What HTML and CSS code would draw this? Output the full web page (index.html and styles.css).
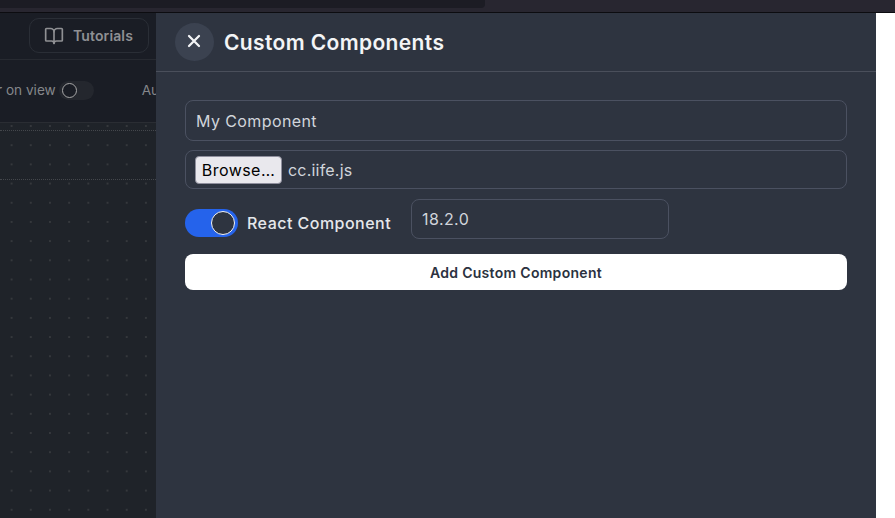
FILE: index.html
```html
<!DOCTYPE html>
<html lang="en">
<head>
<meta charset="utf-8">
<title>Custom Components</title>
<link rel="stylesheet" href="styles.css">
</head>
<body>
<div class="topstrip"><div class="thumb"></div></div>
<div class="main">
  <div class="app">
    <header class="apphead">
      <button class="tutorials">
        <svg class="book" viewBox="0 0 24 24" width="20" height="20" fill="none" stroke="currentColor" stroke-width="2" stroke-linejoin="round" stroke-linecap="round"><path d="M12 7v14"/><path d="M3 18a1 1 0 0 1-1-1V4a1 1 0 0 1 1-1h5a4 4 0 0 1 4 4 4 4 0 0 1 4-4h5a1 1 0 0 1 1 1v13a1 1 0 0 1-1 1h-6a3 3 0 0 0-3 3 3 3 0 0 0-3-3z"/></svg>
        <span>Tutorials</span>
      </button>
    </header>
    <div class="toolbar">
      <span class="tool-label">r on view</span>
      <span class="mini-toggle"><span class="mini-knob"></span></span>
      <span class="tool-label au">Au</span>
    </div>
    <div class="canvas">
      <div class="guide g1"></div>
      <div class="guide g2"></div>
    </div>
  </div>
  <aside class="panel">
    <div class="panel-head">
      <button class="close" aria-label="Close">
        <svg viewBox="0 0 24 24" width="20" height="20" fill="none" stroke="currentColor" stroke-width="2.7" stroke-linecap="round"><path d="M6 6l12 12M18 6L6 18"/></svg>
      </button>
      <h1>Custom Components</h1>
    </div>
    <form class="form">
      <div class="field name">My Component</div>
      <div class="field file"><span class="browse">Browse…</span><span class="filename">cc.iife.js</span></div>
      <div class="react-row">
        <span class="toggle"><span class="knob"></span></span>
        <span class="react-label">React Component</span>
        <div class="field version">18.2.0</div>
      </div>
      <div class="add">Add Custom Component</div>
    </form>
  </aside>
  <div class="edge"></div>
</div>
</body>
</html>
```
FILE: styles.css
```css
* { box-sizing: border-box; }
html, body { margin: 0; height: 100%; overflow: hidden; }
body {
  width: 895px; height: 518px; display: flex; flex-direction: column;
  font-family: Inter, "Liberation Sans", sans-serif; background: #fff;
}
.topstrip { height: 13px; flex: none; background: #282630; border-bottom: 1px solid #0c0c10; }
.thumb { width: 485px; height: 8px; background: #1c1c24; border-radius: 0 0 4px 0; }
.main { flex: 1; display: flex; min-height: 0; }
.app { width: 156px; flex: none; display: flex; flex-direction: column; background: #1f2329; overflow: hidden; }
.apphead {
  height: 47px; flex: none; background: #1a1d25; border-bottom: 1px solid #272a31;
  display: flex; justify-content: flex-end; align-items: flex-start; padding: 5px 7px 0 0;
}
.tutorials {
  width: 120px; height: 35px; background: transparent; border: 1px solid #2a2e36; border-radius: 10px;
  color: #8f9093; font: 600 14px Inter, sans-serif; letter-spacing: .12px; display: flex; align-items: center; gap: 9px; padding: 0 0 0 14px;
}
.toolbar {
  height: 63px; flex: none; background: #1a1d25; border-bottom: 1px solid #2a2d33;
  display: flex; align-items: center; white-space: nowrap; padding-bottom: 2px; overflow: hidden;
}
.tool-label { font-size: 13.6px; color: #85878b; flex: none; }
.tool-label:first-child { margin-left: -3px; }
.au { margin-left: 48px; }
.mini-toggle { width: 35px; height: 19px; flex: none; margin-left: 3px; border-radius: 10px; background: #24272e; display: flex; align-items: center; padding-left: 3px; }
.mini-knob { width: 15px; height: 15px; flex: none; border-radius: 50%; border: 1.5px solid #a8a8a8; background: #1a1d25; }
.canvas {
  flex: 1; position: relative;
  background-color: #1f2329;
  background-image: radial-gradient(circle, #35383c 1.1px, transparent 1.4px);
  background-size: 19.2px 19.2px; background-position: 2px -6.6px;
}
.guide { position: absolute; left: 0; right: 0; border-top: 1px dotted #44474c; }
.g1 { top: 7px; }
.g2 { top: 56px; }
.panel { width: 720px; flex: none; background: #2e3440; display: flex; flex-direction: column; }
.panel-head {
  height: 59px; flex: none; border-bottom: 1px solid #4a4f5b;
  display: flex; align-items: center; gap: 10px; padding: 0 0 1px 19px;
}
.close {
  width: 39px; height: 38px; border: 0; border-radius: 50%; padding: 0 1px 1px 0; background: #3b4250; color: #f3f4f6;
  display: flex; align-items: center; justify-content: center;
}
h1 { margin: 3px 0 0; font-size: 21px; font-weight: 600; color: #f3f4f6; line-height: 28px; letter-spacing: .37px; white-space: nowrap; }
.form { padding: 28px 29px 0; display: flex; flex-direction: column; }
.field {
  border: 1px solid #4b5161; border-radius: 8px; color: #d1d5db; font-size: 16px; letter-spacing: .4px;
  display: flex; align-items: center; padding: 0 10px;
}
.name { height: 41px; }
.file { height: 39px; margin-top: 9px; gap: 0; padding-left: 9px; }
.filename { letter-spacing: .2px; }
.browse {
  width: 87px; height: 28px; flex: none; margin-right: 6px; background: #e9e8ed; border: 1px solid #8f8f9d; border-radius: 4px;
  color: #000; letter-spacing: .45px; display: flex; align-items: center; justify-content: center;
}
.react-row { display: flex; align-items: center; margin-top: 10px; height: 40px; }
.toggle { width: 53px; height: 28px; margin-top: 8px; flex: none; border-radius: 14px; background: #2563eb; display: flex; align-items: center; justify-content: flex-end; padding-right: 3px; }
.knob { width: 24px; height: 24px; border-radius: 50%; border: 1.5px solid #f3f4f6; background: #2e3440; }
.react-label { margin: 8px 0 0 9px; font-size: 16px; font-weight: 500; color: #e5e7eb; white-space: nowrap; letter-spacing: .47px; }
.version { width: 258px; height: 40px; margin-left: 20px; }
.add {
  height: 36px; margin-top: 15px; background: #fff; border-radius: 8px; color: #2b3240;
  font-size: 14px; font-weight: 600; letter-spacing: .3px; display: flex; align-items: center; justify-content: center;
}
.edge { flex: 1; background: #fff; }
```
